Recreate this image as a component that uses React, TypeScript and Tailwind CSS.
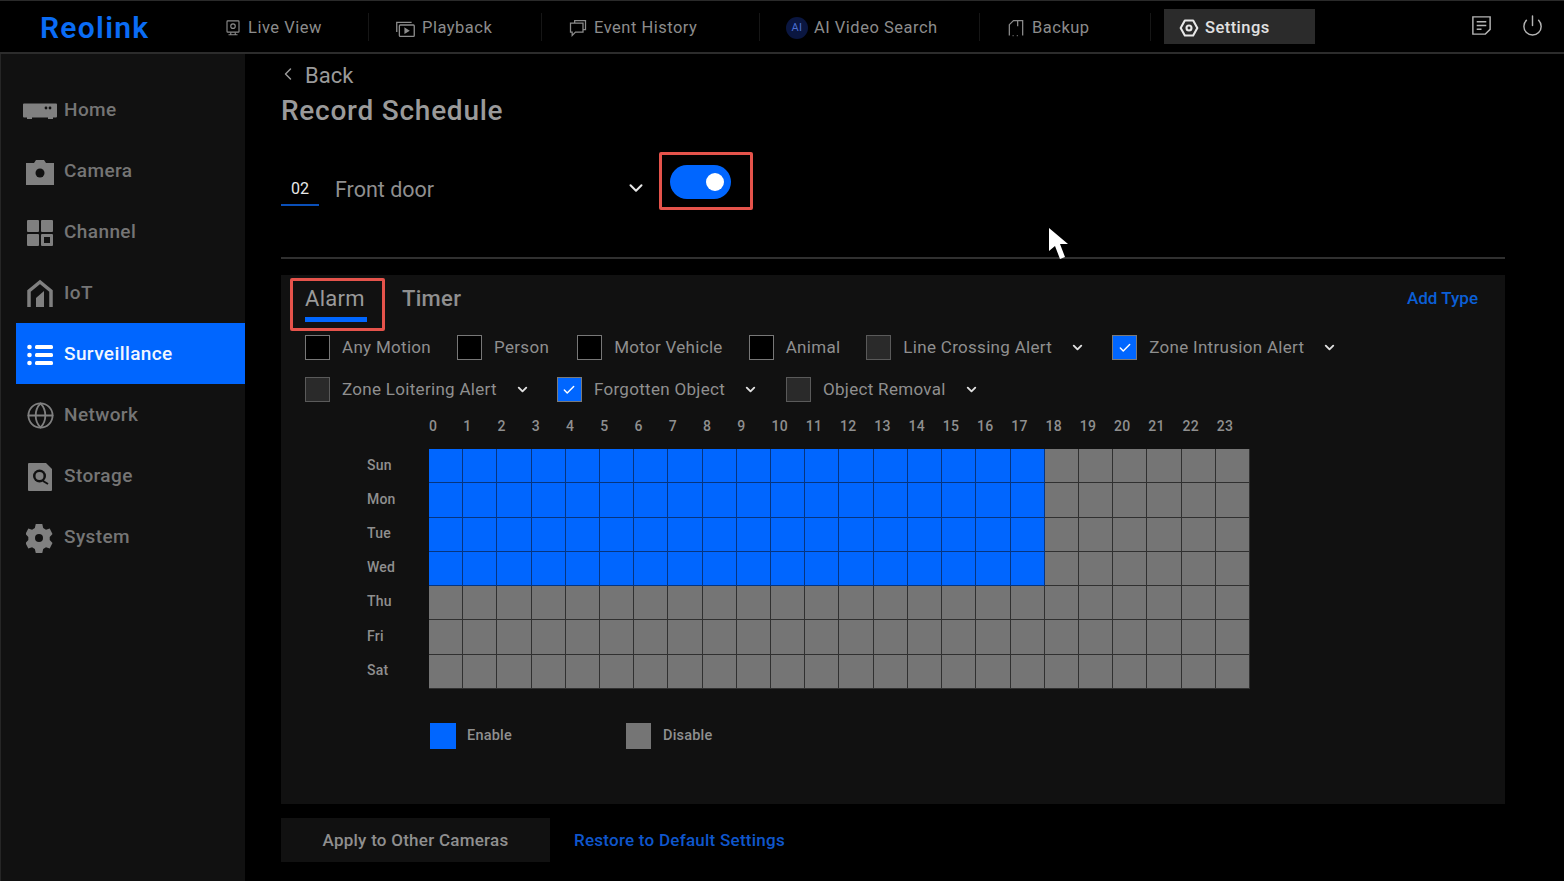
import {Check, ChevronDown, ChevronLeft, Globe, Power} from 'lucide-react';
import type {ReactNode} from 'react';

const font = {fontFamily: 'Roboto, "Liberation Sans", sans-serif'};

const HOURS = Array.from({length: 24}, (_, i) => i);
const DAYS = ['Sun', 'Mon', 'Tue', 'Wed', 'Thu', 'Fri', 'Sat'];

function Svg({className, children}: {className: string; children: ReactNode}) {
  return (
    <svg className={className} viewBox="0 0 24 24" fill="none" stroke="currentColor" strokeWidth="1.5">
      {children}
    </svg>
  );
}

// Top bar icons
function LiveViewIcon() {
  return (
    <Svg className="w-[18px] h-[20px]">
      <rect x="4" y="2.5" width="16" height="15" rx="1" />
      <circle cx="12" cy="9.5" r="3" />
      <path d="M6 21h12M9 18v3M15 18v3" />
    </Svg>
  );
}

function PlaybackIcon() {
  return (
    <Svg className="w-[21px] h-[21px]">
      <path d="M2 16V5h17" />
      <rect x="5" y="8" width="17" height="13" rx="1" />
      <path d="M11.5 12l4 2.5-4 2.5z" fill="currentColor" />
    </Svg>
  );
}

function HistoryIcon() {
  return (
    <Svg className="w-[20px] h-[20px]">
      <path d="M8 6V3h13v11h-3" />
      <path d="M3 6h15v11H9l-4 4v-4H3z" />
    </Svg>
  );
}

function AiIcon() {
  return (
    <span className="w-[22px] h-[22px] rounded-full bg-[#0a1640] flex items-center justify-center text-[11px] text-[#4a6fd0]">
      AI
    </span>
  );
}

function BackupIcon() {
  return (
    <Svg className="w-[20px] h-[20px]">
      <path d="M4 21v-13l5-5h11v18M14 3v7" />
      <path d="M8 21h1M13 21h1" />
    </Svg>
  );
}

function SettingsIcon() {
  return (
    <svg className="w-[20px] h-[20px]" viewBox="0 0 24 24" fill="none" stroke="#e8e8e8" strokeWidth="2.5">
      <path d="M7 3h10l5 9-5 9H7l-5-9z" strokeLinejoin="round" />
      <circle cx="12" cy="12" r="3" />
    </svg>
  );
}

function NotesIcon() {
  return (
    <Svg className="w-[23px] h-[23px] text-[#b5b5b5]">
      <path d="M3 3h18v13l-5 5H3z" />
      <path d="M7 8h10M7 12h10M7 16h5" />
    </Svg>
  );
}

// Sidebar icons
function HomeIcon() {
  return (
    <svg className="w-[36px] h-[36px]" viewBox="0 0 36 36" fill="#808080">
      <path d="M1 11.500a1 1 0 0 1 1-1h32a1 1 0 0 1 1 1v12a1 1 0 0 1-1 1h-3v1.500h-5v-1.500H10v1.500H5v-1.500H2a1 1 0 0 1-1-1z" />
      <circle cx="24" cy="15" r="1.400" fill="#111" />
      <circle cx="28" cy="15" r="1.400" fill="#111" />
    </svg>
  );
}

function CameraIcon() {
  return (
    <svg className="w-[30px] h-[30px]" viewBox="0 0 30 30" fill="#808080">
      <path d="M1 6h8l2-3h8l2 3h8v22H1z" />
      <circle cx="15" cy="16" r="4.500" fill="#111" />
    </svg>
  );
}

function ChannelIcon() {
  return (
    <svg className="w-[28px] h-[28px]" viewBox="0 0 28 28" fill="#808080">
      <rect x="1" y="1" width="12" height="12" rx="1" />
      <rect x="15" y="1" width="12" height="12" rx="1" />
      <rect x="1" y="15" width="12" height="12" rx="1" />
      <rect x="15" y="15" width="12" height="12" rx="1" />
      <rect x="18" y="18" width="6" height="6" fill="#111" />
    </svg>
  );
}

function IotIcon() {
  return (
    <svg className="w-[28px] h-[30px]" viewBox="0 0 28 30" fill="none">
      <path d="M3 28V12L14 3l11 9v16" stroke="#808080" strokeWidth="3.500" />
      <path d="M10 28V19l8-7v16z" fill="#808080" />
    </svg>
  );
}

function ListIcon() {
  return (
    <svg className="w-[26px] h-[22px]" viewBox="0 0 26 22" fill="#fff">
      <circle cx="2.500" cy="3" r="2.300" />
      <circle cx="2.500" cy="11" r="2.300" />
      <circle cx="2.500" cy="19" r="2.300" />
      <rect x="8" y="1" width="18" height="4" rx="1.500" />
      <rect x="8" y="9" width="18" height="4" rx="1.500" />
      <rect x="8" y="17" width="18" height="4" rx="1.500" />
    </svg>
  );
}

function StorageIcon() {
  return (
    <svg className="w-[26px] h-[30px]" viewBox="0 0 26 30" fill="#808080">
      <path d="M1 2a1 1 0 0 1 1-1h17l6 6v21a1 1 0 0 1-1 1H2a1 1 0 0 1-1-1z" />
      <circle cx="12.500" cy="14" r="6.500" fill="#111" />
      <circle cx="12.500" cy="14" r="4" fill="#808080" />
      <path d="M16 19l5 3" stroke="#111" strokeWidth="2" />
    </svg>
  );
}

function GearIcon() {
  return (
    <svg className="w-[28px] h-[30px]" viewBox="0 0 28 30" fill="#808080">
      <path d="M10.500 1h7l1 4 3 1.800 4-1.200 3 5.400-3 3v3l3 3-3 5.400-4-1.200-3 1.800-1 4h-7l-1-4-3-1.800-4 1.200-3-5.400 3-3v-3l-3-3 3-5.400 4 1.200 3-1.800z" transform="translate(0 0) scale(0.93 1)" />
      <circle cx="13" cy="15" r="4" fill="#111" />
    </svg>
  );
}

const NAV: {label: string; icon: ReactNode; width: string}[] = [
  {label: 'Live View', icon: <LiveViewIcon />, width: 'w-[171px]'},
  {label: 'Playback', icon: <PlaybackIcon />, width: 'w-[173px]'},
  {label: 'Event History', icon: <HistoryIcon />, width: 'w-[218px]'},
  {label: 'AI Video Search', icon: <AiIcon />, width: 'w-[220px]'},
  {label: 'Backup', icon: <BackupIcon />, width: 'w-[171px]'},
];

const SIDE: {label: string; icon: ReactNode; active?: boolean}[] = [
  {label: 'Home', icon: <HomeIcon />},
  {label: 'Camera', icon: <CameraIcon />},
  {label: 'Channel', icon: <ChannelIcon />},
  {label: 'IoT', icon: <IotIcon />},
  {label: 'Surveillance', icon: <ListIcon />, active: true},
  {label: 'Network', icon: <Globe className="w-[29px] h-[29px]" color="#808080" strokeWidth={1.5} />},
  {label: 'Storage', icon: <StorageIcon />},
  {label: 'System', icon: <GearIcon />},
];

function TopBar() {
  return (
    <header className="h-[54px] shrink-0 flex items-center bg-black border-t border-b-2 border-t-[#2a2a2a] border-b-[#2c2c2c]">
      <div className="w-[198px] pl-[40px] pt-[3px] text-[30px] leading-none font-semibold tracking-[1.3px] text-[#0a6cf5]">
        Reolink
      </div>
      {NAV.map((item) => (
        <div
          key={item.label}
          className={`${item.width} h-[28px] pt-[3px] flex items-center gap-[6px] pl-[26px] border-r border-[#161616] text-[#8c8c8c] text-[16.5px] tracking-[0.5px]`}
        >
          <span className="text-[#8c8c8c] flex">{item.icon}</span>
          {item.label}
        </div>
      ))}
      <div className="ml-[13px] w-[151px] h-[35px] pt-[3px] bg-[#2b2b2b] flex items-center gap-[6px] pl-[15px] text-[#e0e0e0] text-[16.5px] font-medium tracking-[0.45px]">
        <SettingsIcon />
        Settings
      </div>
      <div className="ml-auto mr-[20px] -mt-[2px] flex items-center gap-[28px]">
        <NotesIcon />
        <Power className="w-[23px] h-[23px] text-[#b5b5b5]" strokeWidth={1.5} />
      </div>
    </header>
  );
}

function Sidebar() {
  return (
    <aside className="w-[245px] shrink-0 bg-[#111111] border-l border-[#262626] pt-[25px] pl-[15px]">
      {SIDE.map((item) => (
        <div
          key={item.label}
          className={`h-[61px] pt-[2px] flex items-center text-[19px] tracking-[0.4px] font-medium ${
            item.active ? 'bg-[#0066ff] text-[#f2f7ff]' : 'text-[#757575]'
          }`}
        >
          <span className="w-[48px] flex items-center justify-center">{item.icon}</span>
          {item.label}
        </div>
      ))}
    </aside>
  );
}

function Option({
  label,
  checked,
  dark,
  caret,
  gap,
}: {
  label: string;
  checked?: boolean;
  dark?: boolean;
  caret?: boolean;
  gap: string;
}) {
  return (
    <div className={`flex items-center ${gap}`}>
      <span
        className={`w-[25px] h-[25px] flex items-center justify-center border ${
          checked
            ? 'bg-[#0066ff] border-[#7a7a7a]'
            : dark
              ? 'bg-[#2a2a2a] border-[#5a5a5a]'
              : 'bg-black border-[#777777]'
        }`}
      >
        {checked && <Check className="w-[14px] h-[14px] text-white" strokeWidth={2.5} />}
      </span>
      <span className="ml-[12px] text-[17px] leading-none tracking-[0.3px] text-[#8f8f8f]">{label}</span>
      {caret && <ChevronDown className="ml-[18px] w-[15px] h-[15px] text-[#e0e0e0]" strokeWidth={3} />}
    </div>
  );
}

function ScheduleGrid() {
  return (
    <div className="pl-[86px]">
      <div className="flex pl-[62px] h-[16px] items-center text-[14px] font-medium text-[#8f8f8f] tracking-[0.4px]">
        {HOURS.map((h) => (
          <span key={h} className="w-[34.26px] shrink-0">
            {h}
          </span>
        ))}
      </div>
      <div className="flex mt-[15px]">
        <div className="w-[62px] shrink-0 -mt-px">
          {DAYS.map((d) => (
            <div key={d} className="h-[34.2px] flex items-center text-[14px] font-medium text-[#8f8f8f] tracking-[0.2px]">
              {d}
            </div>
          ))}
        </div>
        <div className="grid grid-cols-24 w-[821px] h-[240px]">
          {DAYS.flatMap((d, row) =>
            HOURS.map((h) => (
              <div
                key={`${d}-${h}`}
                className={
                  row < 4 && h < 18
                    ? 'bg-[#0066ff] border-r border-b border-[#06357f]'
                    : 'bg-[#757575] border-r border-b border-[#303030]'
                }
              />
            )),
          )}
        </div>
      </div>
      <div className="flex items-center mt-[34px] pl-[63px] text-[14.500px] font-medium text-[#8f8f8f] tracking-[0.2px]">
        <span className="w-[26px] h-[26px] bg-[#0066ff]" />
        <span className="ml-[11px] w-[159px]">Enable</span>
        <span className="w-[25px] h-[26px] bg-[#757575]" />
        <span className="ml-[12px]">Disable</span>
      </div>
    </div>
  );
}

function Content() {
  return (
    <main className="flex-1 min-w-0 pl-[36px] pr-[59px] bg-black">
      <div className="flex items-center h-[24px] mt-[9px] text-[22px] text-[#9a9a9a]">
        <ChevronLeft className="w-[20px] h-[20px] -ml-[3px] mt-[-3px] text-[#9a9a9a]" strokeWidth={1.75} />
        <span className="ml-[7px]">Back</span>
      </div>
      <h1 className="mt-[6px] text-[28px] leading-[36px] font-medium tracking-[0.75px] text-[#9a9a9a]">Record Schedule</h1>

      <div className="mt-[24px] h-[106px] border-b-2 border-[#303030] flex items-start">
        <div className="flex items-center w-[378px] mt-[13px]">
          <span className="w-[38px] h-[39px] pt-[8px] flex items-center justify-center text-[16px] text-[#e8e8e8] border-b-2 border-[#0a4fb8]">
            02
          </span>
          <span className="ml-[16px] pt-[8px] text-[21.500px] text-[#8f8f8f]">Front door</span>
          <ChevronDown className="ml-auto mr-[12px] w-[22px] h-[22px] mt-[3px] text-[#e8e8e8]" strokeWidth={2.2} />
        </div>
        <div className="-mt-[1px] w-[94px] h-[58px] border-[3px] border-[#e5534b] rounded-[2px] flex items-start pl-[8px] pt-[10px]">
          <div className="w-[61px] h-[34px] rounded-full bg-[#0066ff] flex items-center justify-end pr-[7px]">
            <span className="w-[18px] h-[18px] rounded-full bg-white" />
          </div>
        </div>
      </div>

      <section className="mt-[16px] h-[529px] bg-[#111111] pt-[3px]">
        <div className="flex items-start pl-[9px] pr-[27px]">
          <div className="w-[95px] h-[53px] border-[3px] border-[#e5534b] rounded-[2px] pl-[12px] pt-[3px]">
            <div className="text-[22px] leading-[30px] text-[#9a9a9a] tracking-[0.3px]">Alarm</div>
            <div className="w-[62px] h-[5px] mt-[3px] bg-[#0066ff]" />
          </div>
          <div className="ml-[17px] mt-[6px] text-[22px] leading-[30px] font-medium text-[#8f8f8f] tracking-[0.3px]">Timer</div>
          <div className="ml-auto mt-[8px] text-[17px] font-medium text-[#0b5fd6]">Add Type</div>
        </div>

        <div className="flex items-center pl-[24px] mt-[3px] h-[27px]">
          <Option label="Any Motion" gap="mr-[26px]" />
          <Option label="Person" gap="mr-[28px]" />
          <Option label="Motor Vehicle" gap="mr-[26px]" />
          <Option label="Animal" gap="mr-[26px]" />
          <Option label="Line Crossing Alert" dark caret gap="mr-[27px]" />
          <Option label="Zone Intrusion Alert" checked caret gap="" />
        </div>
        <div className="flex items-center pl-[24px] mt-[15px] h-[27px]">
          <Option label="Zone Loitering Alert" dark caret gap="mr-[27px]" />
          <Option label="Forgotten Object" checked caret gap="mr-[28px]" />
          <Option label="Object Removal" dark caret gap="" />
        </div>

        <div className="mt-[15px]">
          <ScheduleGrid />
        </div>
      </section>

      <div className="mt-[14px] flex items-center">
        <button type="button" className="w-[269px] h-[44px] pt-[2px] bg-[#111111] text-[17px] font-medium tracking-[0.25px] text-[#8f8f8f]">
          Apply to Other Cameras
        </button>
        <span className="ml-[24px] pt-[2px] text-[17px] font-medium tracking-[0.25px] text-[#0f56cc]">Restore to Default Settings</span>
      </div>
    </main>
  );
}

export default function App() {
  return (
    <div className="relative w-screen h-screen overflow-hidden bg-black flex flex-col" style={font}>
      <TopBar />
      <div className="flex flex-1 min-h-0">
        <Sidebar />
        <Content />
      </div>
      {/* mouse pointer caught in the capture */}
      <svg className="absolute left-[1047px] top-[227px] w-[23px] h-[34px]" viewBox="0 0 23 34" fill="#fff">
        <path d="M2 1v23l6-5 5 13 5-2-5-13h8z" />
      </svg>
    </div>
  );
}
